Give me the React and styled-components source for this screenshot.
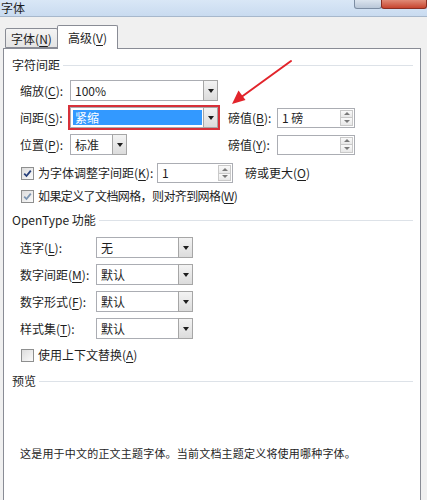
import React from 'react';
import styled, { createGlobalStyle } from 'styled-components';

const Global = createGlobalStyle`
    html, body {
        margin: 0;
        padding: 0;
        background: #f0f0f0;
    }
`

const Window = styled.div`
    width: 427px;
    height: 500px;
    overflow: hidden;
    position: relative;
    display: flex;
    flex-direction: column;
    background: #f0f0f0;
    font-family: "Noto Sans CJK SC", "Noto Sans", sans-serif;
    font-size: 12px;
    line-height: 16px;
    color: #1e1e1e;
`

const TitleBar = styled.div`
    height: 16px;
    flex: none;
    display: flex;
    align-items: flex-start;
    background: linear-gradient(#d9e7f6, #c9dbf0);
    border-bottom: 1px solid #a7b8cc;
`

const Title = styled.span`
    margin: 1px 0 0 1px;
    font-size: 12px;
    line-height: 14px;
    color: #1e1e1e;
`

const Captions = styled.div`
    margin-left: auto;
    display: flex;
`

const CaptionButton = styled.div`
    width: ${props => props.w}px;
    height: 8px;
    border: 1px solid ${props => props.close ? '#8a2e22' : '#7c8da3'};
    border-top: none;
    border-radius: 0 0 3px 3px;
    background: ${props => props.close
        ? 'linear-gradient(#e08a76, #c7452f)'
        : 'linear-gradient(#dbe4ee, #b9c7d8)'};
    margin-left: -1px;
`

const TabStrip = styled.div`
    height: 31px;
    flex: none;
    display: flex;
    align-items: flex-end;
    padding-left: 5px;
    position: relative;
    z-index: 1;
`

const Tab = styled.div`
    height: ${props => props.active ? 24 : 20}px;
    width: ${props => props.w}px;
    box-sizing: border-box;
    margin-left: ${props => props.active ? -1 : 0}px;
    margin-bottom: ${props => props.active ? -1 : 0}px;
    border: 1px solid #898c95;
    border-bottom: ${props => props.active ? 'none' : '1px solid #898c95'};
    border-radius: 2px 2px 0 0;
    background: ${props => props.active ? '#fff' : 'linear-gradient(#f4f4f4, #e4e4e4)'};
    display: flex;
    align-items: center;
    justify-content: center;
    padding-top: ${props => props.active ? 0 : 1}px;
`

const U = styled.span`
    text-decoration: underline;
    text-underline-offset: 2px;
`

const Panel = styled.div`
    margin: 0 6px 0 3px;
    height: 480px;
    flex: none;
    background: #fff;
    border: 1px solid #898c95;
    padding-top: 8px;
    box-sizing: border-box;
`

const GroupHeader = styled.div`
    display: flex;
    align-items: center;
    gap: 3px;
    padding-left: 8px;
    margin-right: 7px;
    margin-top: ${props => props.top || 0}px;
    height: 16px;

    &::after {
        content: "";
        flex: 1;
        height: 1px;
        background: #dde2e8;
        margin-top: 1px;
    }
`

const FieldGrid = styled.div`
    display: grid;
    grid-template-columns: ${props => props.cols};
    grid-auto-rows: 21px;
    row-gap: 6px;
    align-items: center;
    padding-left: 16px;
    margin-top: ${props => props.top || 0}px;
`

const Label = styled.span`
    white-space: nowrap;
`

const Combo = styled.div`
    width: ${props => props.w}px;
    height: 21px;
    box-sizing: border-box;
    border: 1px solid #abadb3;
    background: #fff;
    display: flex;
    align-items: stretch;
    box-shadow: ${props => props.marked ? '0 0 0 2px #d7313a' : 'none'};
    position: relative;
`

const ComboText = styled.div`
    flex: 1;
    display: flex;
    align-items: center;
    padding-left: ${props => props.selected ? 2 : 4}px;
    margin: ${props => props.selected ? '2px 1px 2px 2px' : 0};
    background: ${props => props.selected ? '#3399ff' : 'transparent'};
    color: ${props => props.selected ? '#fff' : '#1e1e1e'};
    white-space: nowrap;
`

const DropButton = styled.div`
    width: 15px;
    box-sizing: border-box;
    border: 1px solid #a6a6a6;
    margin: -1px -1px -1px 0;
    background: linear-gradient(#f3f3f3, #dcdcdc);
    display: flex;
    align-items: center;
    justify-content: center;

    &::before {
        content: "";
        border-left: 3.5px solid transparent;
        border-right: 3.5px solid transparent;
        border-top: 4px solid #1e1e1e;
    }
`

const Spin = styled.div`
    width: ${props => props.w}px;
    height: 20px;
    box-sizing: border-box;
    border: 1px solid #abadb3;
    background: #fff;
    display: flex;
`

const SpinText = styled.div`
    flex: 1;
    display: flex;
    align-items: center;
    padding-left: 4px;
    white-space: nowrap;
`

const SpinButtons = styled.div`
    width: 13px;
    margin: 1px 1px 1px 0;
    display: flex;
    flex-direction: column;
`

const SpinArrow = styled.div`
    flex: 1;
    box-sizing: border-box;
    border: 1px solid #c9c9c9;
    margin-top: ${props => props.down ? -1 : 0}px;
    background: linear-gradient(#fafafa, #e8e8e8);
    display: flex;
    align-items: center;
    justify-content: center;

    &::before {
        content: "";
        border-left: 3px solid transparent;
        border-right: 3px solid transparent;
        border-${props => props.down ? 'top' : 'bottom'}: 3px solid #7a7a7a;
    }
`

const CheckRow = styled.div`
    display: flex;
    align-items: center;
    height: ${props => props.h || 16}px;
    padding-left: 17px;
    margin-top: ${props => props.top || 0}px;
    white-space: nowrap;
`

const Box = styled.div`
    width: 13px;
    height: 13px;
    flex: none;
    box-sizing: border-box;
    border: 1px solid #8e8f8f;
    background: linear-gradient(135deg, #dcdcdc, #fbfbfb);
    margin-right: 4px;
    display: flex;
    align-items: center;
    justify-content: center;
`

const CheckLabel = styled.span`
    width: ${props => props.w ? props.w + 'px' : 'auto'};
    flex: none;
    letter-spacing: ${props => props.tight ? '-0.6px' : '0'};
`

const After = styled.span`
    margin-left: ${props => props.gap}px;
`

const PreviewText = styled.div`
    margin-top: 56px;
    padding-left: 16px;
    font-size: 11px;
    letter-spacing: 0.2px;
    white-space: nowrap;
`

const Pointer = styled.svg`
    position: absolute;
    left: 0;
    top: 0;
    pointer-events: none;
    z-index: 5;
`

const Check = ({ dim }) => (
    <svg width="9" height="9" viewBox="0 0 9 9">
        <path d="M1.2 4.6 L3.5 7 L7.8 1.6" fill="none" stroke={dim ? '#7c95b1' : '#263f7a'} strokeWidth="1.8" />
    </svg>
)

const Checkbox = ({ checked, dim }) => (
    <Box>{checked && <Check dim={dim} />}</Box>
)

const SpinBox = ({ w, value }) => (
    <Spin w={w}>
        <SpinText>{value}</SpinText>
        <SpinButtons>
            <SpinArrow />
            <SpinArrow down />
        </SpinButtons>
    </Spin>
)

const ComboBox = ({ w, value, selected, marked }) => (
    <Combo w={w} marked={marked}>
        <ComboText selected={selected}>{value}</ComboText>
        <DropButton />
    </Combo>
)

const Mn = ({ text, k }) => (
    <Label>{text}(<U>{k}</U>):</Label>
)

const features = [
    { text: '连字', k: 'L', value: '无' },
    { text: '数字间距', k: 'M', value: '默认' },
    { text: '数字形式', k: 'F', value: '默认' },
    { text: '样式集', k: 'T', value: '默认' },
]

const App = () => {
    return (
        <>
            <Global />
            <Window>
                <TitleBar>
                    <Title>字体</Title>
                    <Captions>
                        <CaptionButton w={26} />
                        <CaptionButton w={44} close />
                    </Captions>
                </TitleBar>
                <TabStrip>
                    <Tab w={53}><Label>字体(<U>N</U>)</Label></Tab>
                    <Tab w={61} active><Label>高级(<U>V</U>)</Label></Tab>
                </TabStrip>
                <Panel>
                    <GroupHeader>字符间距</GroupHeader>
                    <FieldGrid cols="50px 158px 49px 78px" top={7}>
                        <Mn text="缩放" k="C" />
                        <ComboBox w={148} value="100%" />
                        <span />
                        <span />

                        <Mn text="间距" k="S" />
                        <ComboBox w={148} value="紧缩" selected marked />
                        <Mn text="磅值" k="B" />
                        <SpinBox w={78} value="1 磅" />

                        <Mn text="位置" k="P" />
                        <ComboBox w={57} value="标准" />
                        <Mn text="磅值" k="Y" />
                        <SpinBox w={78} value="" />
                    </FieldGrid>
                    <CheckRow h={20} top={8}>
                        <Checkbox checked />
                        <CheckLabel w={119}>为字体调整字间距(<U>K</U>):</CheckLabel>
                        <SpinBox w={76} value="1" />
                        <After gap={12}>磅或更大(<U>O</U>)</After>
                    </CheckRow>
                    <CheckRow top={5}>
                        <Checkbox checked dim />
                        <CheckLabel tight>如果定义了文档网格，则对齐到网格(<U>W</U>)</CheckLabel>
                    </CheckRow>

                    <GroupHeader top={8}>OpenType 功能</GroupHeader>
                    <FieldGrid cols="76px 97px" top={9}>
                        {features.map(f => (
                            <React.Fragment key={f.k}>
                                <Mn text={f.text} k={f.k} />
                                <ComboBox w={97} value={f.value} />
                            </React.Fragment>
                        ))}
                    </FieldGrid>
                    <CheckRow top={8}>
                        <Checkbox />
                        <CheckLabel>使用上下文替换(<U>A</U>)</CheckLabel>
                    </CheckRow>

                    <GroupHeader top={10}>预览</GroupHeader>
                    <PreviewText>这是用于中文的正文主题字体。当前文档主题定义将使用哪种字体。</PreviewText>
                </Panel>
                <Pointer width="427" height="500" viewBox="0 0 427 500">
                    <line x1="291" y1="61" x2="240" y2="98" stroke="#e2242b" strokeWidth="2" strokeLinecap="round" />
                    <polygon points="232,104 245.5,100 238.5,90.5" fill="#e2242b" />
                </Pointer>
            </Window>
        </>
    )
}

export default App;
